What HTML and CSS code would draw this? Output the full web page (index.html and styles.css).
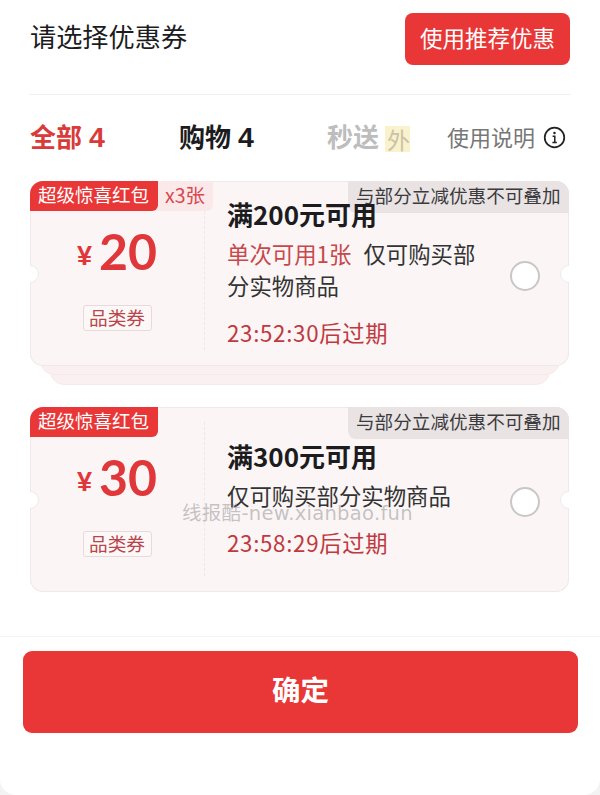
FILE: index.html
```html
<!DOCTYPE html>
<html lang="zh-CN">
<head>
<meta charset="utf-8">
<title>请选择优惠券</title>
<link rel="stylesheet" href="styles.css">
</head>
<body>
<main class="sheet">
  <header class="head">
    <h1 class="head-title">请选择优惠券</h1>
    <button class="recommend" type="button">使用推荐优惠</button>
  </header>
  <nav class="tabs">
    <span class="tab tab-active">全部 <b class="tab-num">4</b></span>
    <span class="tab tab-dark">购物 <b class="tab-num">4</b></span>
    <span class="tab tab-muted">秒送 <span class="tab-mark">外</span></span>
    <span class="help">使用说明
      <svg class="help-icon" viewBox="0 0 24 24" width="24" height="24" aria-hidden="true">
        <circle cx="12" cy="12" r="10.2" fill="none" stroke="#222" stroke-width="1.8"/>
        <circle cx="12" cy="7.4" r="1.3" fill="#222"/>
        <path d="M10 10.8h2.3v6.2M9.8 17.2h4.6" fill="none" stroke="#222" stroke-width="1.6"/>
      </svg>
    </span>
  </nav>
  <section class="coupons">
    <div class="stack">
      <article class="coupon">
        <span class="notch notch-l"></span><span class="notch notch-r"></span>
        <div class="tags-left"><span class="tag-red">超级惊喜红包</span><span class="tag-count">x3张</span></div>
        <span class="tag-grey">与部分立减优惠不可叠加</span>
        <div class="value">
          <div class="amount"><span class="yen">¥</span><span class="num">20</span></div>
          <span class="kind">品类券</span>
        </div>
        <div class="rule"></div>
        <div class="info">
          <h2 class="info-title">满200元可用</h2>
          <p class="info-desc"><span class="hl">单次可用1张</span><span class="desc-gap">仅可购买部分实物商品</span></p>
          <p class="info-time">23:52:30后过期</p>
        </div>
        <span class="radio"></span>
      </article>
    </div>
    <article class="coupon">
      <span class="notch notch-l"></span><span class="notch notch-r"></span>
      <div class="tags-left"><span class="tag-red">超级惊喜红包</span></div>
      <span class="tag-grey">与部分立减优惠不可叠加</span>
      <div class="value">
        <div class="amount"><span class="yen">¥</span><span class="num">30</span></div>
        <span class="kind">品类券</span>
      </div>
      <div class="rule"></div>
      <div class="info">
        <h2 class="info-title">满300元可用</h2>
        <p class="info-desc">仅可购买部分实物商品</p>
        <p class="info-time">23:58:29后过期</p>
      </div>
      <span class="radio"></span>
    </article>
  </section>
  <footer class="foot">
    <button class="confirm" type="button">确定</button>
  </footer>
  <div class="watermark">线报酷-new.xianbao.fun</div>
</main>
</body>
</html>
```
FILE: styles.css
```css
* { box-sizing: border-box; }
html, body { margin: 0; padding: 0; }
body {
  width: 600px;
  height: 795px;
  overflow: hidden;
  background: #f3f3f3;
  font-family: "Noto Sans CJK SC", "Noto Sans", sans-serif;
  color: #1c1c1e;
}
.sheet {
  position: relative;
  height: 795px;
  background: #fff;
  border-radius: 0 0 16px 16px;
}
.head {
  display: flex;
  justify-content: space-between;
  align-items: flex-start;
  margin: 0 30px;
  padding: 13px 0 29px;
  border-bottom: 1px solid #eeeeee;
  height: 95px;
}
.head-title {
  margin: 0;
  font-size: 26.2px;
  font-weight: 400;
  line-height: 46px;
}
.recommend {
  width: 165px;
  height: 52px;
  padding: 0 0 5px;
  border: 0;
  border-radius: 8px;
  background: #e93636;
  color: #fff;
  font: 400 22.5px/46px "Noto Sans CJK SC", sans-serif;
}
.tabs {
  display: flex;
  align-items: center;
  height: 86px;
  padding: 0 34px 4px 30px;
  font-size: 26px;
  font-weight: 700;
}
.tab { width: 149px; white-space: nowrap; line-height: 36px; }
.tab-num { font-family: "Liberation Sans", sans-serif; font-size: 28.5px; font-weight: 700; margin-left: 1px; }
.tab-active { color: #d93a3a; }
.tab-dark { color: #1c1c1e; width: 148px; }
.tab-muted { color: #bdbdbd; width: 83px; }
.tab-mark {
  display: inline-block;
  width: 25px;
  height: 26px;
  background: #faf2cc;
  color: #c9c3a8;
  font-size: 23px;
  font-weight: 400;
  line-height: 26px;
  text-align: right;
  vertical-align: -2px;
}
.help {
  display: flex;
  align-items: center;
  gap: 8px;
  margin-left: auto;
  color: #777;
  font-size: 22px;
  font-weight: 400;
}
.help-icon { width: 23px; height: 23px; margin-top: 3px; }
.coupons {
  display: flex;
  flex-direction: column;
  gap: 22px;
  padding: 0 31px 0 30px;
}
.stack {
  position: relative;
  isolation: isolate;
  padding-bottom: 19px;
}
.stack::before, .stack::after {
  content: "";
  position: absolute;
  bottom: 10px;
  left: 10px;
  right: 9px;
  height: 40px;
  z-index: -1;
  background: #fbf0f1;
  border: 1px solid #f6e9ea;
  border-radius: 0 0 14px 14px;
}
.stack::after {
  bottom: 0;
  left: 20px;
  right: 19px;
  z-index: -2;
}
.coupon {
  position: relative;
  display: flex;
  align-items: center;
  height: 185px;
  overflow: hidden;
  background: #fbf5f6;
  border-radius: 13px;
  box-shadow: inset 0 0 0 1px #efe9ea;
}
.notch {
  position: absolute;
  top: 84px;
  width: 18px;
  height: 18px;
  background: #fff;
  border: 1px solid #efe9ea;
  border-radius: 50%;
}
.notch-l { left: -9px; }
.notch-r { right: -9px; }
.tags-left {
  position: absolute;
  top: 0;
  left: 0;
  display: flex;
  background: #fbe9ea;
  border-radius: 0 0 6px 0;
  font-size: 18.5px;
  line-height: 26px;
}
.tag-red {
  width: 128px;
  height: 30px;
  padding-left: 8px;
  background: #e93636;
  color: #fff;
  border-radius: 0 0 6px 0;
}
.tag-count {
  width: 55px;
  padding-left: 7px;
  color: #d9484d;
  font-size: 19.5px;
  line-height: 28px;
}
.tag-grey {
  position: absolute;
  top: 0;
  right: 0;
  width: 221px;
  height: 32px;
  padding-left: 8px;
  background: #e9e3e4;
  color: #3b3b3d;
  border-radius: 0 0 0 8px;
  font-size: 18.6px;
  line-height: 27px;
  white-space: nowrap;
}
.value {
  display: flex;
  flex-direction: column;
  align-items: center;
  align-self: flex-start;
  flex: 0 0 174px;
  padding: 40px 0 0 0;
}
.amount {
  display: flex;
  align-items: center;
  height: 60px;
  color: #e0383a;
}
.yen { font: 700 27px/1 "Liberation Sans", sans-serif; margin: 11px 7px 0 0; }
.num { font: 700 50px/60px Lato, sans-serif; }
.kind {
  height: 26px;
  width: 69px;
  margin-top: 24px;
  border: 1px solid #ead9da;
  border-radius: 3px;
  background: #fdf8f8;
  color: #b8454a;
  font-size: 18.7px;
  line-height: 22px;
  text-align: center;
}
.rule {
  align-self: stretch;
  margin: 15px 0 16px;
  border-left: 1px dashed #eee6e7;
}
.info {
  position: relative;
  z-index: 1;
  flex: 0 0 284px;
  padding: 0 0 3px 22px;
}
.info-title {
  margin: 1px 0 0;
  font-size: 26px;
  font-weight: 700;
  line-height: 32px;
}
.info-desc {
  width: 262px;
  margin: 7px 0 0;
  font-size: 22.4px;
  line-height: 32px;
  color: #333;
}
.hl { color: #c8474b; }
.desc-gap { margin-left: 12px; }
.info-time {
  margin: 15px 0 0;
  font-size: 22.3px;
  letter-spacing: .7px;
  line-height: 32px;
  color: #c0393f;
}
.radio {
  flex: none;
  width: 30px;
  height: 30px;
  margin: 4px 0 0 21px;
  border: 2px solid #c9c6c6;
  border-radius: 50%;
  background: #fff;
}
.foot {
  margin-top: 44px;
  padding: 14px 22px 0 23px;
  border-top: 1px solid #f3f3f5;
}
.confirm {
  display: block;
  width: 555px;
  height: 82px;
  padding: 0 0 6px;
  border: 0;
  border-radius: 9px;
  background: #e93636;
  color: #fff;
  font: 700 28.5px/76px "Noto Sans CJK SC", sans-serif;
}
.watermark {
  position: absolute;
  z-index: 2;
  left: 182px;
  top: 500px;
  color: rgba(120, 120, 120, .42);
  font-family: "DejaVu Sans", "Noto Sans CJK SC", sans-serif;
  font-size: 19.5px;
  letter-spacing: .3px;
  line-height: 28px;
  white-space: nowrap;
}
```
